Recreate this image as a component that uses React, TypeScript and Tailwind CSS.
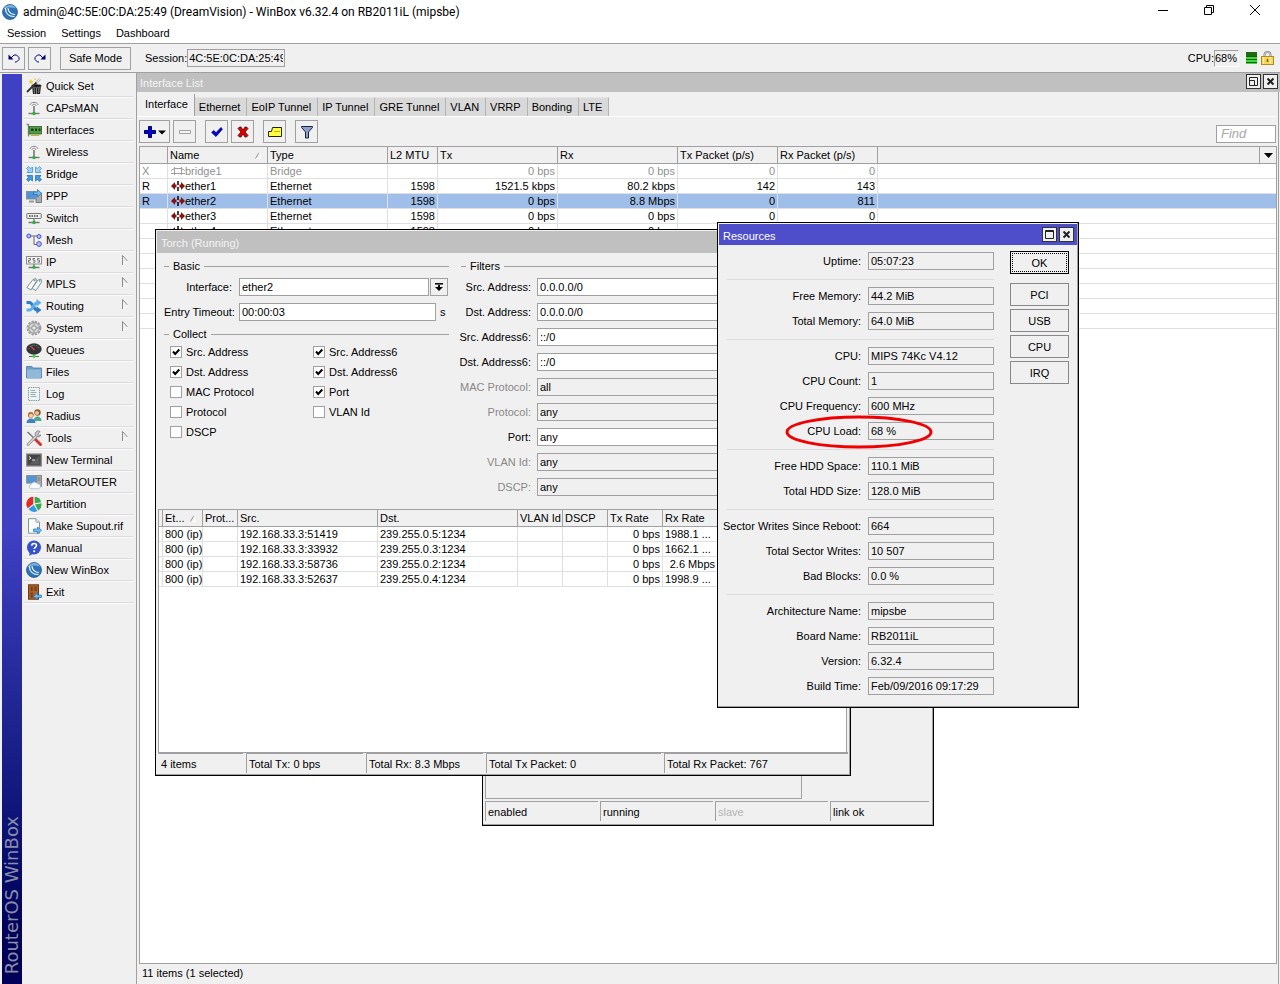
import React from "react";

const FONT = "font-['Liberation_Sans',Arial,sans-serif] text-[11px] leading-[14px]";

const stroke = { fill: "none", strokeLinecap: "round", strokeLinejoin: "round" } as const;

const icons: Record<string, React.ReactNode> = {
  wand: (
    <>
      <path d="M6 8h9l-1 8H7z" fill="#222" />
      <ellipse cx="10.500" cy="7.800" rx="5" ry="1.600" fill="#111" stroke="#888" strokeWidth=".7" />
      <path d="M8 9.500l.5 6M10.500 10v6M13 9.500l-.4 5.500" stroke="#999" strokeWidth=".8" />
      <path d="M1 14L11 4" stroke="#333" strokeWidth="1.800" />
      <path d="M10.500 4.500L14 1" stroke="#999" strokeWidth="2.400" />
      <path d="M10.500 4.500L14 1" stroke="#eee" strokeWidth="1.200" />
      <path d="M5 1l.8 1.700 1.900.3-1.400 1.300.3 1.900L5 5.300l-1.600.9.3-1.900L2.300 3l1.900-.3z" fill="#e6cf45" />
      <path d="M9 0v2M8 1h2" stroke="#e6cf45" strokeWidth=".8" />
    </>
  ),
  antenna: (
    <>
      <path d="M4 4.500C5 1.500 11 1.500 12 4.500M6 5.500c.6-1.700 3.400-1.700 4 0" stroke="#888" {...stroke} />
      <path d="M8 6v6" stroke="#666" strokeWidth="1.400" />
      <path d="M2.500 13.500h11" stroke="#777" strokeWidth="1.400" />
      <circle cx="8" cy="13.500" r="1.800" fill="#2fae3a" />
    </>
  ),
  card: (
    <>
      <path d="M.5 2.500h2v12" stroke="#888" strokeWidth="1.400" fill="none" />
      <rect x="3" y="4.500" width="12.500" height="7.500" fill="#4f9c45" stroke="#27682a" strokeWidth=".8" />
      <path d="M5 6.500h2.500v2.500H5zM9 6.500h2v2.500H9zM12.500 6.500h2v2.500h-2z" fill="#1e3d20" />
      <path d="M5 12v1.500h8V12" stroke="#c9ae3a" fill="none" />
    </>
  ),
  bridge: (
    <>
      <g fill="#9ad4f8" stroke="#3585cc" strokeWidth=".7">
        <path d="M.5 2.500l2-2L4.500 2.500 6.500 1v5.500H1L2.500 4.500z" />
        <path d="M15.500 2.500l-2-2-2 2L9.500 1v5.500H15l-1.500-2z" />
      </g>
      <g fill="#3f9be0" stroke="#1f66ad" strokeWidth=".7">
        <path d="M.5 13.500l2 2 2-2 2 1.500V9.500H1l1.500 2z" />
        <path d="M15.500 13.500l-2 2-2-2-2 1.500V9.500H15l-1.500 2z" />
      </g>
    </>
  ),
  ppp: (
    <>
      <rect x="10" y="5" width="5.500" height="9.500" fill="#a9adb3" stroke="#555" strokeWidth=".7" />
      <rect x=".5" y="3.500" width="9.500" height="7.500" fill="#4d94d8" stroke="#8b8f94" />
      <path d="M3 12.500h5v2H3z" fill="#999" />
      <path d="M7.500 4h4V1.500l4 3.800-4 3.700V6.500h-4z" fill="#6dbdf2" stroke="#1c67aa" strokeWidth=".7" />
    </>
  ),
  switch: (
    <>
      <rect x=".8" y="3.500" width="14.400" height="5" rx=".6" fill="#eee" stroke="#777" />
      <path d="M3 6h10" stroke="#444" strokeWidth="1.600" strokeDasharray="1.500 1" />
      <path d="M8 9v3M2.500 12.500h11" stroke="#777" strokeWidth="1.300" />
      <circle cx="8" cy="12.500" r="1.800" fill="#2fae3a" />
    </>
  ),
  mesh: (
    <>
      <path d="M4 4h8M8 4v8.500h3" stroke="#666" fill="none" />
      <g fill="#b4bcf5" stroke="#4954c8">
        <circle cx="2.800" cy="4" r="2" />
        <circle cx="13" cy="4.500" r="2" />
        <circle cx="13" cy="12" r="2.400" />
      </g>
    </>
  ),
  ip: (
    <>
      <rect x=".5" y="2.500" width="15" height="7.500" fill="#f4f4f4" stroke="#8c8c8c" />
      <path d="M2.500 4.500h2v1.700h-2v2h2M9 4.500H7v1.700h2v2H7M13.500 4.500h-2v1.700h2v2h-2" stroke="#666" strokeWidth=".9" fill="none" />
      <path d="M8 10v3M2.500 13.500h11" stroke="#777" strokeWidth="1.300" />
      <circle cx="8" cy="13.300" r="1.700" fill="#2fae3a" />
    </>
  ),
  tags: (
    <g fill="#f3f7f7" stroke="#6e8a8c" strokeWidth=".9">
      <path d="M.8 11.500L7 3.500l3-1 .4 3L5 14z" />
      <path d="M6 12.500L12 4l3-.8.5 3L10 14.500z" />
      <circle cx="8.500" cy="4.500" r=".5" />
      <circle cx="13.700" cy="5" r=".5" />
    </g>
  ),
  routing: (
    <>
      <path d="M.5 4.500h3c3.500 0 4 7.500 7.500 7.500" stroke="#2f7dc4" strokeWidth="3" fill="none" />
      <path d="M.5 12h3c3.500 0 4-7 7.500-7" stroke="#5fb0ea" strokeWidth="3" fill="none" />
      <path d="M10.500 1l5 3.800-5 3.700z" fill="#5fb0ea" />
      <path d="M10.500 8.300l5 3.700-5 3.800z" fill="#2f7dc4" />
    </>
  ),
  gear: (
    <>
      <circle cx="8" cy="8" r="6.500" fill="none" stroke="#999" strokeWidth="1.800" strokeDasharray="2.300 1.100" />
      <circle cx="8" cy="8" r="5.400" fill="#d4d4d4" stroke="#888" strokeWidth=".8" />
      <circle cx="8" cy="8" r="2.200" fill="#eee" stroke="#888" />
      <path d="M8 3v2.500M8 10.500V13M3 8h2.500M10.500 8H13" stroke="#999" />
    </>
  ),
  queues: (
    <>
      <ellipse cx="8" cy="7" rx="7.700" ry="5.800" fill="#333" />
      <path d="M3 7a5 3.800 0 0 1 10 0" stroke="#999" fill="none" strokeDasharray="1 1.200" />
      <path d="M5 4.500L8.500 8" stroke="#d44" strokeWidth="1.200" />
      <path d="M8 12v2M3 14.500h10" stroke="#666" strokeWidth="1.200" />
      <circle cx="8" cy="14.200" r="1.700" fill="#43d04b" />
    </>
  ),
  folder: (
    <>
      <path d="M.5 2.500h5.500l1 1.500h8.500v10H.5z" fill="#6d9cc4" stroke="#4b7ba3" strokeWidth=".8" />
      <path d="M1 5.500h14V14H1z" fill="#8fb8da" />
    </>
  ),
  log: (
    <>
      <path d="M2.500 1.500h11v13h-11z" fill="#eef3f3" stroke="#8da0a3" strokeDasharray="1.500 .7" />
      <path d="M4.500 4.500H9M4.500 6.500h6M4.500 8.500h5M4.500 10.500h6" stroke="#8aa7ab" strokeWidth=".9" />
    </>
  ),
  radius: (
    <>
      <circle cx="11.500" cy="4.500" r="3.200" fill="#8a5a2b" />
      <circle cx="11" cy="5" r="2" fill="#f0c49a" />
      <path d="M7.500 13c0-6 8-6 8 0z" fill="#4aa88e" />
      <circle cx="4.800" cy="7" r="2.900" fill="#b86a26" />
      <circle cx="5" cy="7.700" r="2" fill="#f5cfa8" />
      <path d="M.5 15c0-6 9-6 9 0z" fill="#3f7fc8" />
    </>
  ),
  tools: (
    <>
      <path d="M1.500 2L9 9" stroke="#777" strokeWidth="1.500" />
      <path d="M9 9l5.500 5.500" stroke="#d63434" strokeWidth="3" strokeLinecap="round" />
      <path d="M2 14.500L11 5.500" stroke="#888" strokeWidth="2.600" strokeLinecap="round" />
      <path d="M2 14.500L11 5.500" stroke="#ddd" strokeWidth="1.200" strokeLinecap="round" />
      <path d="M14 1.500a3 3 0 1 0 1 3.500l-2.300.3-1-1.200z" fill="#ccc" stroke="#777" strokeWidth=".8" />
    </>
  ),
  terminal: (
    <>
      <rect x=".7" y="2" width="14.600" height="12" fill="#444" stroke="#8c8c8c" strokeWidth="1.300" />
      <path d="M2.500 12.500L13.500 4v8.500z" fill="#5d5d5d" />
      <path d="M3 4.500l2 1.500-2 1.500M6 8h3" stroke="#fff" strokeWidth=".9" fill="none" />
    </>
  ),
  meta: (
    <>
      <rect x="10.500" y="1.500" width="5" height="11" fill="#a9adb3" stroke="#666" strokeWidth=".7" />
      <path d="M11.500 4h3M11.500 6h3" stroke="#666" strokeWidth=".7" />
      <rect x=".6" y="1.600" width="9.500" height="7.500" fill="#4d94d8" stroke="#8b8f94" />
      <path d="M5 14.800a2.300 2.300 0 0 1 .3-4.500 3.300 3.300 0 0 1 6-.5 2.600 2.600 0 0 1 1.400 5z" fill="#f7fafd" stroke="#9fb2c6" strokeWidth=".7" />
    </>
  ),
  pie: (
    <>
      <path d="M7.300 8V.8a7.200 7.200 0 0 0-5.600 11.400z" fill="#e02c2c" />
      <path d="M8.700 7.300V.8a7.200 7.200 0 0 1 6.500 5.500z" fill="#3aa84e" />
      <path d="M9 8.500l6.400-1.200a7.200 7.200 0 0 1-3.200 7.200z" fill="#3aa84e" />
      <path d="M7.800 9l3.600 6a7.200 7.200 0 0 1-8.900-2z" fill="#2f9be4" />
    </>
  ),
  supout: (
    <>
      <path d="M2.500.7h7.500l3.500 3.500v11h-11z" fill="#fbfcfc" stroke="#7d979b" />
      <path d="M10 .7v3.500h3.500" fill="#dfe8ea" stroke="#7d979b" strokeWidth=".8" />
      <path d="M7.500 11h4V9l4 3.300-4 3.200v-2h-4z" fill="#69bdf0" stroke="#1f74b4" strokeWidth=".7" />
    </>
  ),
  manual: (
    <>
      <circle cx="8" cy="7.500" r="7" fill="#3552cc" />
      <path d="M4 12l-1 3.800L8 13.500z" fill="#3552cc" />
      <path d="M5.700 5.800c0-3.200 4.800-3 4.800-.3 0 1.800-2.300 1.800-2.300 3.500" stroke="#fff" strokeWidth="1.600" fill="none" />
      <circle cx="8.200" cy="11.200" r="1" fill="#fff" />
    </>
  ),
  winbox: (
    <>
      <circle cx="8" cy="8" r="7.500" fill="#2c73b8" stroke="#1d4d82" strokeWidth=".7" />
      <path d="M1.500 5.500A7 7 0 0 1 14 4.500C10 3 5 3 1.500 5.500z" fill="#79b2e4" />
      <path d="M3.500 4.500c0 5 3.500 8 8.500 8M6 4.500c.5 3.500 2.500 5.500 6.500 6" stroke="#fff" strokeWidth="1.200" fill="none" strokeLinecap="round" />
    </>
  ),
  exit: (
    <>
      <rect x="2.500" y=".8" width="10" height="14.400" fill="#a9622c" stroke="#6b3b17" />
      <path d="M4.500 2.500h2.300v4.500H4.500zM8.300 2.500h2.300v4.500H8.300zM4.500 8.500h2.300v5H4.500z" fill="#7b421a" />
      <path d="M15.500 11h-4V9l-4 3.300 4 3.200v-2h4z" fill="#69bdf0" stroke="#1f74b4" strokeWidth=".7" />
    </>
  ),
};

const Icon = ({ name }: { name: string }) => (
  <svg viewBox="0 0 16 16" className="w-4 h-4 shrink-0" aria-hidden="true">
    {icons[name]}
  </svg>
);

const menuItems = [
  { icon: "wand", label: "Quick Set" },
  { icon: "antenna", label: "CAPsMAN" },
  { icon: "card", label: "Interfaces" },
  { icon: "antenna", label: "Wireless" },
  { icon: "bridge", label: "Bridge" },
  { icon: "ppp", label: "PPP" },
  { icon: "switch", label: "Switch" },
  { icon: "mesh", label: "Mesh" },
  { icon: "ip", label: "IP", sub: true },
  { icon: "tags", label: "MPLS", sub: true },
  { icon: "routing", label: "Routing", sub: true },
  { icon: "gear", label: "System", sub: true },
  { icon: "queues", label: "Queues" },
  { icon: "folder", label: "Files" },
  { icon: "log", label: "Log" },
  { icon: "radius", label: "Radius" },
  { icon: "tools", label: "Tools", sub: true },
  { icon: "terminal", label: "New Terminal" },
  { icon: "meta", label: "MetaROUTER" },
  { icon: "pie", label: "Partition" },
  { icon: "supout", label: "Make Supout.rif" },
  { icon: "manual", label: "Manual" },
  { icon: "winbox", label: "New WinBox" },
  { icon: "exit", label: "Exit" },
];

const tabs = ["Ethernet", "EoIP Tunnel", "IP Tunnel", "GRE Tunnel", "VLAN", "VRRP", "Bonding", "LTE"];

const interfaces = [
  { flag: "X", name: "bridge1", type: "Bridge", mtu: "", tx: "0 bps", rx: "0 bps", txp: "0", rxp: "0" },
  { flag: "R", name: "ether1", type: "Ethernet", mtu: "1598", tx: "1521.5 kbps", rx: "80.2 kbps", txp: "142", rxp: "143" },
  { flag: "R", name: "ether2", type: "Ethernet", mtu: "1598", tx: "0 bps", rx: "8.8 Mbps", txp: "0", rxp: "811" },
  { flag: "", name: "ether3", type: "Ethernet", mtu: "1598", tx: "0 bps", rx: "0 bps", txp: "0", rxp: "0" },
  { flag: "", name: "ether4", type: "Ethernet", mtu: "1598", tx: "0 bps", rx: "0 bps", txp: "", rxp: "" },
];

const torchRows = [
  { src: "192.168.33.3:51419", dst: "239.255.0.5:1234", rx: "1988.1 ..." },
  { src: "192.168.33.3:33932", dst: "239.255.0.3:1234", rx: "1662.1 ..." },
  { src: "192.168.33.3:58736", dst: "239.255.0.2:1234", rx: "2.6 Mbps" },
  { src: "192.168.33.3:52637", dst: "239.255.0.4:1234", rx: "1998.9 ..." },
];

const filters = [
  { label: "Src. Address:", value: "0.0.0.0/0" },
  { label: "Dst. Address:", value: "0.0.0.0/0" },
  { label: "Src. Address6:", value: "::/0" },
  { label: "Dst. Address6:", value: "::/0" },
  { label: "MAC Protocol:", value: "all", off: true },
  { label: "Protocol:", value: "any", off: true },
  { label: "Port:", value: "any" },
  { label: "VLAN Id:", value: "any", off: true },
  { label: "DSCP:", value: "any", off: true },
];

const collect = [
  [
    { label: "Src. Address", checked: true },
    { label: "Dst. Address", checked: true },
    { label: "MAC Protocol", checked: false },
    { label: "Protocol", checked: false },
    { label: "DSCP", checked: false },
  ],
  [
    { label: "Src. Address6", checked: true },
    { label: "Dst. Address6", checked: true },
    { label: "Port", checked: true },
    { label: "VLAN Id", checked: false },
  ],
];

const resources = [
  [["Uptime:", "05:07:23"]],
  [
    ["Free Memory:", "44.2 MiB"],
    ["Total Memory:", "64.0 MiB"],
  ],
  [
    ["CPU:", "MIPS 74Kc V4.12"],
    ["CPU Count:", "1"],
    ["CPU Frequency:", "600 MHz"],
    ["CPU Load:", "68 %"],
  ],
  [
    ["Free HDD Space:", "110.1 MiB"],
    ["Total HDD Size:", "128.0 MiB"],
  ],
  [
    ["Sector Writes Since Reboot:", "664"],
    ["Total Sector Writes:", "10 507"],
    ["Bad Blocks:", "0.0 %"],
  ],
  [
    ["Architecture Name:", "mipsbe"],
    ["Board Name:", "RB2011iL"],
    ["Version:", "6.32.4"],
    ["Build Time:", "Feb/09/2016 09:17:29"],
  ],
];

const TitleBar = () => (
  <header className="flex items-center justify-between h-6 pl-[2px] pr-[2px] bg-white">
    <div className="flex items-center gap-[5px]">
      <Icon name="winbox" />
      <h1 className="font-['Roboto',sans-serif] text-[12px] leading-4 text-black whitespace-nowrap">
        admin@4C:5E:0C:DA:25:49 (DreamVision) - WinBox v6.32.4 on RB2011iL (mipsbe)
      </h1>
    </div>
    <div className="flex self-start">
      <button aria-label="Minimize" className="w-[46px] h-5 flex items-center justify-center">
        <svg viewBox="0 0 10 10" className="w-[10px] h-[10px]">
          <path d="M0 5.500h10" stroke="#000" />
        </svg>
      </button>
      <button aria-label="Restore" className="w-[46px] h-5 flex items-center justify-center">
        <svg viewBox="0 0 10 10" className="w-[10px] h-[10px]">
          <path d="M.5 2.500h7v7h-7zM2.500 2.500v-2h7v7h-2" stroke="#000" fill="none" />
        </svg>
      </button>
      <button aria-label="Close" className="w-[46px] h-5 flex items-center justify-center">
        <svg viewBox="0 0 10 10" className="w-[10px] h-[10px]">
          <path d="M0 0l10 10M10 0L0 10" stroke="#000" />
        </svg>
      </button>
    </div>
  </header>
);

const SessionBar = () => (
  <div className="flex items-center h-[30px] pl-[2px] pr-[6px] bg-[#f0f0f0] border-t border-b border-[#a0a0a0]">
    <div className="flex gap-[3px]">
      <button aria-label="Undo" className="w-[23px] h-[23px] border border-[#a0a0a0] flex items-center justify-center">
        <svg viewBox="0 0 12 12" className="w-3 h-3">
          <path d="M2.500 6.500L6 3h2.500L11 5.500v2L8.500 10H7" stroke="#00007b" fill="none" />
          <path d="M.5 2.500v5h5z" fill="#00007b" />
        </svg>
      </button>
      <button aria-label="Redo" className="w-[23px] h-[23px] border border-[#a0a0a0] flex items-center justify-center">
        <svg viewBox="0 0 12 12" className="w-3 h-3">
          <path d="M9.500 6.500L6 3H3.500L1 5.500v2L3.500 10H5" stroke="#00007b" fill="none" />
          <path d="M11.500 2.500v5h-5z" fill="#00007b" />
        </svg>
      </button>
    </div>
    <button className="w-[71px] h-[23px] ml-[9px] border border-[#a0a0a0] text-[11px]">Safe Mode</button>
    <label htmlFor="session" className="ml-[14px]">
      Session:
    </label>
    <input
      id="session"
      readOnly
      defaultValue="4C:5E:0C:DA:25:49"
      className="w-[98px] h-[18px] px-px border border-[#a0a0a0] outline-none"
    />
    <label htmlFor="cpu" className="ml-auto">
      CPU:
    </label>
    <input
      id="cpu"
      readOnly
      defaultValue="68%"
      className="w-[25px] h-[17px] border border-l-[#a0a0a0] border-t-[#a0a0a0] border-r-white border-b-white outline-none"
    />
    <svg viewBox="0 0 11 12" className="w-[11px] h-3 ml-[7px]" aria-hidden="true">
      <path d="M0 0h11v4H0z" fill="#1e6b14" />
      <path d="M0 4h11v8H0z" fill="#3fd93c" />
      <path d="M0 4.500h11M0 7.500h11M0 10.500h11" stroke="#145c10" />
    </svg>
    <svg viewBox="0 0 13 14" className="w-[13px] h-[14px] ml-1" aria-hidden="true">
      <path d="M3.500 6V4a3 3 0 0 1 6 0v2" stroke="#888" strokeWidth="2" fill="none" />
      <path d="M3.500 6V4a3 3 0 0 1 6 0v2" stroke="#ddd" strokeWidth=".7" fill="none" />
      <rect x=".5" y="5.500" width="12" height="8" fill="#f6d75b" stroke="#b38a22" />
      <path d="M2.500 6v7M9.500 6v7" stroke="#fff0ae" />
      <path d="M6.500 8v3" stroke="#7b5a10" strokeWidth="1.500" />
    </svg>
  </div>
);

const Sidebar = () => (
  <aside className="flex w-[137px] shrink-0 pl-[2px] pt-px bg-[#f0f0f0] border-r border-[#a0a0a0]">
    <div className="w-5 flex items-end justify-center pb-[10px] bg-linear-to-b from-[#4040c4] from-50% to-[#000058] to-95%">
      <span className="[writing-mode:vertical-rl] rotate-180 font-['DejaVu_Sans',sans-serif] text-[18px] leading-5 text-[#8c8ca8] whitespace-nowrap">
        RouterOS WinBox
      </span>
    </div>
    <nav className="flex-1 pl-[2px] pr-[3px] pt-px">
      {menuItems.map((item) => (
        <a
          key={item.label}
          href="#"
          className="flex items-center h-[22px] pl-[2px] gap-1 border-b border-[#dcdcdc] shadow-[0_1px_0_#fafafa]"
        >
          <Icon name={item.icon} />
          <span className="whitespace-nowrap">{item.label}</span>
          {item.sub && (
            <svg viewBox="0 0 8 10" className="w-2 h-[10px] ml-auto mr-1 mb-1" aria-hidden="true">
              <path d="M1.500 10V.5L6.500 6" stroke="#8c8c8c" fill="none" />
              <path d="M2 9.500L7 6" stroke="#fff" fill="none" />
            </svg>
          )}
        </a>
      ))}
    </nav>
  </aside>
);

const FrameButtons = ({ restore }: { restore?: boolean }) => (
  <div className="flex gap-[2px]">
    <button
      aria-label={restore ? "Restore" : "Maximize"}
      className="w-[15px] h-[15px] bg-[#f0f0f0] border border-[#333] flex items-center justify-center"
    >
      <svg viewBox="0 0 9 9" className="w-[9px] h-[9px]">
        <path d={restore ? "M.5 .5h8v8h-8zM.5 3.500h5v5" : "M.5 .5h8v8h-8zM.5 1.500h8"} stroke="#222" fill="none" />
      </svg>
    </button>
    <button aria-label="Close" className="w-[15px] h-[15px] bg-[#f0f0f0] border border-[#333] flex items-center justify-center">
      <svg viewBox="0 0 9 9" className="w-[9px] h-[9px]">
        <path d="M1.500 1.500l6 6M7.500 1.500l-6 6" stroke="#222" strokeWidth="2" />
      </svg>
    </button>
  </div>
);

const ToolButton = ({ label, className = "w-[23px]", children }: { label: string; className?: string; children: React.ReactNode }) => (
  <button aria-label={label} className={`${className} h-[23px] border border-[#a0a0a0] flex items-center justify-center`}>
    {children}
  </button>
);

const Toolbar = () => (
  <div className="flex items-center h-[29px] pl-[2px] pr-[2px]">
    <div className="flex gap-[9px]">
      <div className="flex gap-[3px]">
        <ToolButton label="Add" className="w-[31px]">
          <svg viewBox="0 0 22 12" className="w-[22px] h-3">
            <path d="M4.500.5h3v4h4v3h-4v4h-3v-4h-4v-3h4z" fill="#0000e6" stroke="#000050" />
            <path d="M14 4.500h8l-4 4z" fill="#000" />
          </svg>
        </ToolButton>
        <ToolButton label="Remove">
          <svg viewBox="0 0 12 4" className="w-3 h-1">
            <path d="M.5.5h11v3H.5z" fill="#f4f4f4" stroke="#a0a0a0" />
          </svg>
        </ToolButton>
      </div>
      <div className="flex gap-[3px]">
        <ToolButton label="Enable">
          <svg viewBox="0 0 12 12" className="w-3 h-3">
            <path d="M.7 6.500l2-2L5 6.700 10 1.500l1.300 1.700L5 10.500z" fill="#0000f0" stroke="#000050" strokeWidth=".8" />
          </svg>
        </ToolButton>
        <ToolButton label="Disable">
          <svg viewBox="0 0 12 12" className="w-3 h-3">
            <path d="M1 2.500L2.500 1H4l2 3 2-3h1.500L11 2.500 8 6l3 3.500L9.500 11H8L6 8l-2 3H2.500L1 9.500 4 6z" fill="#e00000" stroke="#500000" strokeWidth=".8" />
          </svg>
        </ToolButton>
      </div>
      <ToolButton label="Comment">
        <svg viewBox="0 0 14 12" className="w-[14px] h-3">
          <path d="M4.500 1.500h9v9H.5v-5h3z" fill="#ffff40" stroke="#222" />
          <path d="M6 5.500h6" stroke="#bfb800" />
        </svg>
      </ToolButton>
      <ToolButton label="Filter">
        <svg viewBox="0 0 12 14" className="w-3 h-[14px]">
          <path d="M.5 1.500h11v1L7.500 7v6h-3V7L.5 2.500z" fill="#8ca0cc" stroke="#1b2240" />
        </svg>
      </ToolButton>
    </div>
    <input
      aria-label="Find"
      placeholder="Find"
      className="w-[60px] h-[18px] ml-auto mt-1 px-1 bg-white border border-[#a0a0a0] text-[13px] italic placeholder:text-[#a8a8a8] outline-none"
    />
  </div>
);

const EtherIcon = () => (
  <svg viewBox="0 0 14 10" className="w-[14px] h-[10px] shrink-0" aria-hidden="true">
    <path d="M0 5l4-4v2.500h1.500v3H4V9zM14 5l-4-4v2.500H8.500v3H10V9z" fill="#8a1010" />
    <path d="M7 0v4M7 6v4" stroke="#000" strokeWidth="1.500" />
  </svg>
);

const BridgeIcon = () => (
  <svg viewBox="0 0 14 10" className="w-[14px] h-[10px] shrink-0" aria-hidden="true">
    <path d="M0 7.500h14M3.500 1v8M10.500 1v8M0 4.500l3.500-2h7l3.500 2" stroke="#a0a0a0" fill="none" />
  </svg>
);

const SortMark = () => (
  <svg viewBox="0 0 6 7" className="w-[6px] h-[7px] shrink-0" aria-hidden="true">
    <path d="M.5 6.500L4 .5" stroke="#909090" />
    <path d="M4 .5l1.500 6H1" stroke="#fff" fill="none" />
  </svg>
);

const th = "h-[18px] px-[2px] border-y border-r border-[#a0a0a0] text-left font-normal whitespace-nowrap";
const td = "h-[15px] px-[2px] border-b border-r border-[#e0e0e0] whitespace-nowrap";

const InterfaceTable = () => (
  <table className="w-full table-fixed border-separate border-spacing-0">
    <colgroup>
      <col className="w-[28px]" />
      <col className="w-[100px]" />
      <col className="w-[120px]" />
      <col className="w-[50px]" />
      <col className="w-[120px]" />
      <col className="w-[120px]" />
      <col className="w-[100px]" />
      <col className="w-[100px]" />
      <col />
      <col className="w-4" />
    </colgroup>
    <thead className="bg-[#f0f0f0]">
      <tr>
        <th className={th} aria-label="Flags" />
        <th className={th}>
          <span className="flex items-center justify-between pr-1">
            Name
            <SortMark />
          </span>
        </th>
        <th className={th}>Type</th>
        <th className={th}>L2 MTU</th>
        <th className={th}>Tx</th>
        <th className={th}>Rx</th>
        <th className={th}>Tx Packet (p/s)</th>
        <th className={th}>Rx Packet (p/s)</th>
        <th className={th} />
        <th className="h-[18px] border-y border-[#a0a0a0]">
          <button aria-label="Columns" className="flex w-full justify-center">
            <svg viewBox="0 0 9 5" className="w-[9px] h-[5px]">
              <path d="M0 0h9L4.500 5z" fill="#000" />
            </svg>
          </button>
        </th>
      </tr>
    </thead>
    <tbody>
      {interfaces.map((row) => (
        <tr key={row.name} className={row.name === "ether2" ? "bg-[#9fbfea]" : row.flag === "X" ? "text-[#909090]" : ""}>
          <td className={td}>{row.flag}</td>
          <td className={td}>
            <span className="flex items-center pl-px">
              {row.flag === "X" ? <BridgeIcon /> : <EtherIcon />}
              {row.name}
            </span>
          </td>
          <td className={td}>{row.type}</td>
          <td className={`${td} text-right`}>{row.mtu}</td>
          <td className={`${td} text-right`}>{row.tx}</td>
          <td className={`${td} text-right`}>{row.rx}</td>
          <td className={`${td} text-right`}>{row.txp}</td>
          <td className={`${td} text-right`}>{row.rxp}</td>
          <td colSpan={2} className="h-[15px] border-b border-[#e0e0e0]" />
        </tr>
      ))}
      {[6, 7, 8, 9, 10, 11].map((n) => (
        <tr key={n}>
          <td className={td} />
          <td colSpan={9} className="h-[15px] border-b border-[#e0e0e0]" />
        </tr>
      ))}
    </tbody>
  </table>
);

const Legend = ({ children }: { children: React.ReactNode }) => (
  <div className="flex items-center gap-1 h-4">
    <span className="w-[5px] border-t border-[#a0a0a0]" />
    <span>{children}</span>
    <span className="flex-1 border-t border-[#a0a0a0]" />
  </div>
);

const TorchTable = () => (
  <table className="w-full table-fixed border-separate border-spacing-0">
    <colgroup>
      <col className="w-1" />
      <col className="w-[40px]" />
      <col className="w-[35px]" />
      <col className="w-[140px]" />
      <col className="w-[140px]" />
      <col className="w-[45px]" />
      <col className="w-[45px]" />
      <col className="w-[55px]" />
      <col className="w-[55px]" />
      <col />
    </colgroup>
    <thead className="bg-[#f0f0f0]">
      <tr>
        <th className="border-y border-r border-[#a0a0a0]" />
        <th className={th}>
          <span className="flex items-center justify-between pr-1">
            Et...
            <SortMark />
          </span>
        </th>
        <th className={th}>Prot...</th>
        <th className={th}>Src.</th>
        <th className={th}>Dst.</th>
        <th className={th}>VLAN Id</th>
        <th className={th}>DSCP</th>
        <th className={th}>Tx Rate</th>
        <th className={th}>Rx Rate</th>
        <th className={th} />
      </tr>
    </thead>
    <tbody>
      {torchRows.map((row) => (
        <tr key={row.src}>
          <td className="border-b border-r border-[#e0e0e0]" />
          <td className={td}>800 (ip)</td>
          <td className={td} />
          <td className={td}>{row.src}</td>
          <td className={td}>{row.dst}</td>
          <td className={td} />
          <td className={td} />
          <td className={`${td} text-right`}>0 bps</td>
          <td className={row.rx.endsWith("Mbps") ? `${td} text-right` : td}>{row.rx}</td>
          <td className={td} />
        </tr>
      ))}
    </tbody>
  </table>
);

const StatusCell = ({ className, children }: { className: string; children: React.ReactNode }) => (
  <span className={`${className} h-5 pl-[2px] pt-[3px] border-l border-t border-[#a0a0a0] whitespace-nowrap`}>{children}</span>
);

const TorchWindow = () => (
  <section className="absolute left-[18px] top-[156px] w-[696px] h-[547px] flex flex-col p-px bg-[#f0f0f0] border border-black shadow-[inset_-1px_-1px_0_#a0a0a0]">
    <h2 className="h-[22px] pl-1 pt-[5px] bg-[#c0c0c0] text-[#f4f4f4]">Torch (Running)</h2>
    <div className="flex gap-3 pl-[7px] pr-2 pt-[5px]">
      <div className="w-[285px]">
        <Legend>Basic</Legend>
        <div className="flex items-center pt-1">
          <label htmlFor="torch-if" className="w-[68px] text-right">
            Interface:
          </label>
          <input
            id="torch-if"
            defaultValue="ether2"
            className="w-[190px] h-[18px] ml-[7px] px-[2px] bg-white border border-[#a0a0a0] outline-none"
          />
          <button aria-label="Choose interface" className="w-[18px] h-[18px] ml-px border border-[#a0a0a0] flex items-center justify-center">
            <svg viewBox="0 0 8 8" className="w-2 h-2">
              <path d="M0 .8h8" stroke="#000" strokeWidth="1.500" />
              <path d="M3 2h2v2h3L4 8 0 4h3z" fill="#000" />
            </svg>
          </button>
        </div>
        <div className="flex items-center pt-[7px]">
          <label htmlFor="torch-timeout" className="w-[68px] text-right whitespace-nowrap">
            Entry Timeout:
          </label>
          <input
            id="torch-timeout"
            defaultValue="00:00:03"
            className="w-[197px] h-[18px] ml-[7px] px-[2px] bg-white border border-[#a0a0a0] outline-none"
          />
          <span className="pl-1">s</span>
        </div>
        <div className="pt-[5px]">
          <Legend>Collect</Legend>
        </div>
        <div className="flex pl-[6px]">
          {collect.map((column, i) => (
            <div key={i} className="w-[143px] shrink-0">
              {column.map((box) => (
                <label key={box.label} className="flex items-center h-5 gap-1">
                  <span className="grid w-3 h-3">
                    <input
                      type="checkbox"
                      defaultChecked={box.checked}
                      className="peer col-start-1 row-start-1 appearance-none w-3 h-3 bg-white border border-[#a0a0a0]"
                    />
                    <svg viewBox="0 0 12 12" className="hidden peer-checked:block col-start-1 row-start-1 w-3 h-3 pointer-events-none">
                      <path d="M3 5.500L5.200 8 9.300 3.500" stroke="#000" strokeWidth="2" fill="none" />
                    </svg>
                  </span>
                  {box.label}
                </label>
              ))}
            </div>
          ))}
        </div>
      </div>
      <div className="flex-1">
        <Legend>Filters</Legend>
        <div className="flex flex-col gap-[7px] pt-1">
          {filters.map((f) => (
            <label key={f.label} className={`flex items-center gap-[6px] ${f.off ? "text-[#888]" : ""}`}>
              <span className="w-[70px] flex justify-end whitespace-nowrap">{f.label}</span>
              <input
                defaultValue={f.value}
                className={`flex-1 h-[18px] px-[2px] text-black border border-[#a0a0a0] outline-none ${f.off ? "bg-[#f0f0f0]" : "bg-white"}`}
              />
            </label>
          ))}
        </div>
      </div>
    </div>
    <div className="flex-1 mt-[13px] mx-px mr-[2px] bg-white border-l border-r border-[#a0a0a0] overflow-hidden">
      <TorchTable />
    </div>
    <div className="flex gap-[3px] mx-px mb-px border-t border-[#a0a0a0]">
      <StatusCell className="w-[85px] border-l-transparent">4 items</StatusCell>
      <StatusCell className="w-[117px]">Total Tx: 0 bps</StatusCell>
      <StatusCell className="w-[117px]">Total Rx: 8.3 Mbps</StatusCell>
      <StatusCell className="w-[175px]">Total Tx Packet: 0</StatusCell>
      <StatusCell className="flex-1">Total Rx Packet: 767</StatusCell>
    </div>
  </section>
);

const InterfaceWindow = () => (
  <section className="absolute left-[345px] top-[227px] w-[452px] h-[526px] flex flex-col p-[2px] bg-[#f0f0f0] border border-black shadow-[inset_-1px_-1px_0_#a0a0a0]">
    <div className="flex-1 w-[317px] border border-[#a0a0a0]" />
    <div className="flex gap-[2px] mt-[2px] mb-[2px] pr-[2px]">
      <StatusCell className="w-[113px]">enabled</StatusCell>
      <StatusCell className="w-[113px]">running</StatusCell>
      <StatusCell className="w-[113px] text-[#b4b4b4]">slave</StatusCell>
      <StatusCell className="flex-1">link ok</StatusCell>
    </div>
  </section>
);

const ResourcesWindow = () => (
  <section className="absolute left-[580px] top-[149px] w-[362px] h-[486px] p-px bg-[#f0f0f0] border border-black shadow-[inset_-1px_-1px_0_#a0a0a0]">
    <div className="flex items-center justify-between h-[21px] pl-1 pr-[3px] bg-[#4e4ecb] text-white">
      <h2 className="pt-[2px]">Resources</h2>
      <FrameButtons />
    </div>
    <div className="flex pl-2 pt-[7px]">
      <div className="w-[267px] flex flex-col gap-[7px]">
        {resources.map((group, i) => (
          <div key={i} className={i ? "flex flex-col gap-[7px] mt-[2px] pt-[7px] border-t border-[#dcdcdc]" : "flex flex-col"}>
            {group.map(([label, value]) => (
              <label key={label} className="flex items-center gap-[7px]">
                <span className="flex flex-1 min-w-0 justify-end whitespace-nowrap">{label}</span>
                <input readOnly defaultValue={value} className="w-[126px] h-[18px] px-[2px] border border-[#a0a0a0] outline-none" />
              </label>
            ))}
          </div>
        ))}
      </div>
      <div className="flex flex-col gap-[3px] w-[59px] ml-4 -mt-px">
        <button className="h-[23px] mb-[6px] p-px border border-black">
          <span className="flex items-center justify-center h-full border border-dotted border-black">OK</span>
        </button>
        <button className="h-[23px] border border-[#888]">PCI</button>
        <button className="h-[23px] border border-[#888]">USB</button>
        <button className="h-[23px] border border-[#888]">CPU</button>
        <button className="h-[23px] border border-[#888]">IRQ</button>
      </div>
    </div>
    <svg viewBox="0 0 148 34" className="absolute left-[67px] top-[192px] w-[148px] h-[34px] pointer-events-none" aria-hidden="true">
      <ellipse cx="74" cy="17" rx="72" ry="15" fill="none" stroke="#f00000" strokeWidth="3" />
    </svg>
  </section>
);

const App = () => {
  return (
    <div className={`${FONT} min-h-screen flex flex-col bg-[#f0f0f0] text-black`}>
      <TitleBar />
      <nav className="flex gap-[15px] h-[19px] pl-[7px] pt-[2px] bg-white">
        <a href="#">Session</a>
        <a href="#">Settings</a>
        <a href="#">Dashboard</a>
      </nav>
      <SessionBar />
      <div className="flex flex-1">
        <Sidebar />
        <main className="relative flex-1 flex flex-col">
          <div className="flex justify-between h-[19px] pl-[3px] pr-[2px] pt-px bg-[#c0c0c0] text-[#f4f4f4]">
            <h2 className="pt-[2px]">Interface List</h2>
            <FrameButtons restore />
          </div>
          <div className="flex-1 flex flex-col pt-[2px] mr-px border-r border-[#a0a0a0]">
            <div className="flex items-end border-b border-white" role="tablist">
              <button role="tab" aria-selected="true" className="h-[22px] pl-2 pr-[6px] pb-[2px] border-r border-[#a0a0a0]">
                Interface
              </button>
              {tabs.map((tab) => (
                <button
                  key={tab}
                  role="tab"
                  aria-selected="false"
                  className="h-[19px] pl-1 pr-[6px] bg-[#d9d9d9] border-r border-r-[#b4b4b4] border-t border-t-[#e4e4e4] whitespace-nowrap"
                >
                  {tab}
                </button>
              ))}
            </div>
            <Toolbar />
            <div className="flex-1 ml-[2px] mr-px bg-white border-x border-b border-[#a0a0a0]">
              <InterfaceTable />
            </div>
            <div className="h-5 pl-[5px] pt-[2px]">11 items (1 selected)</div>
          </div>
          <InterfaceWindow />
          <TorchWindow />
          <ResourcesWindow />
        </main>
      </div>
    </div>
  );
};

export default App;
